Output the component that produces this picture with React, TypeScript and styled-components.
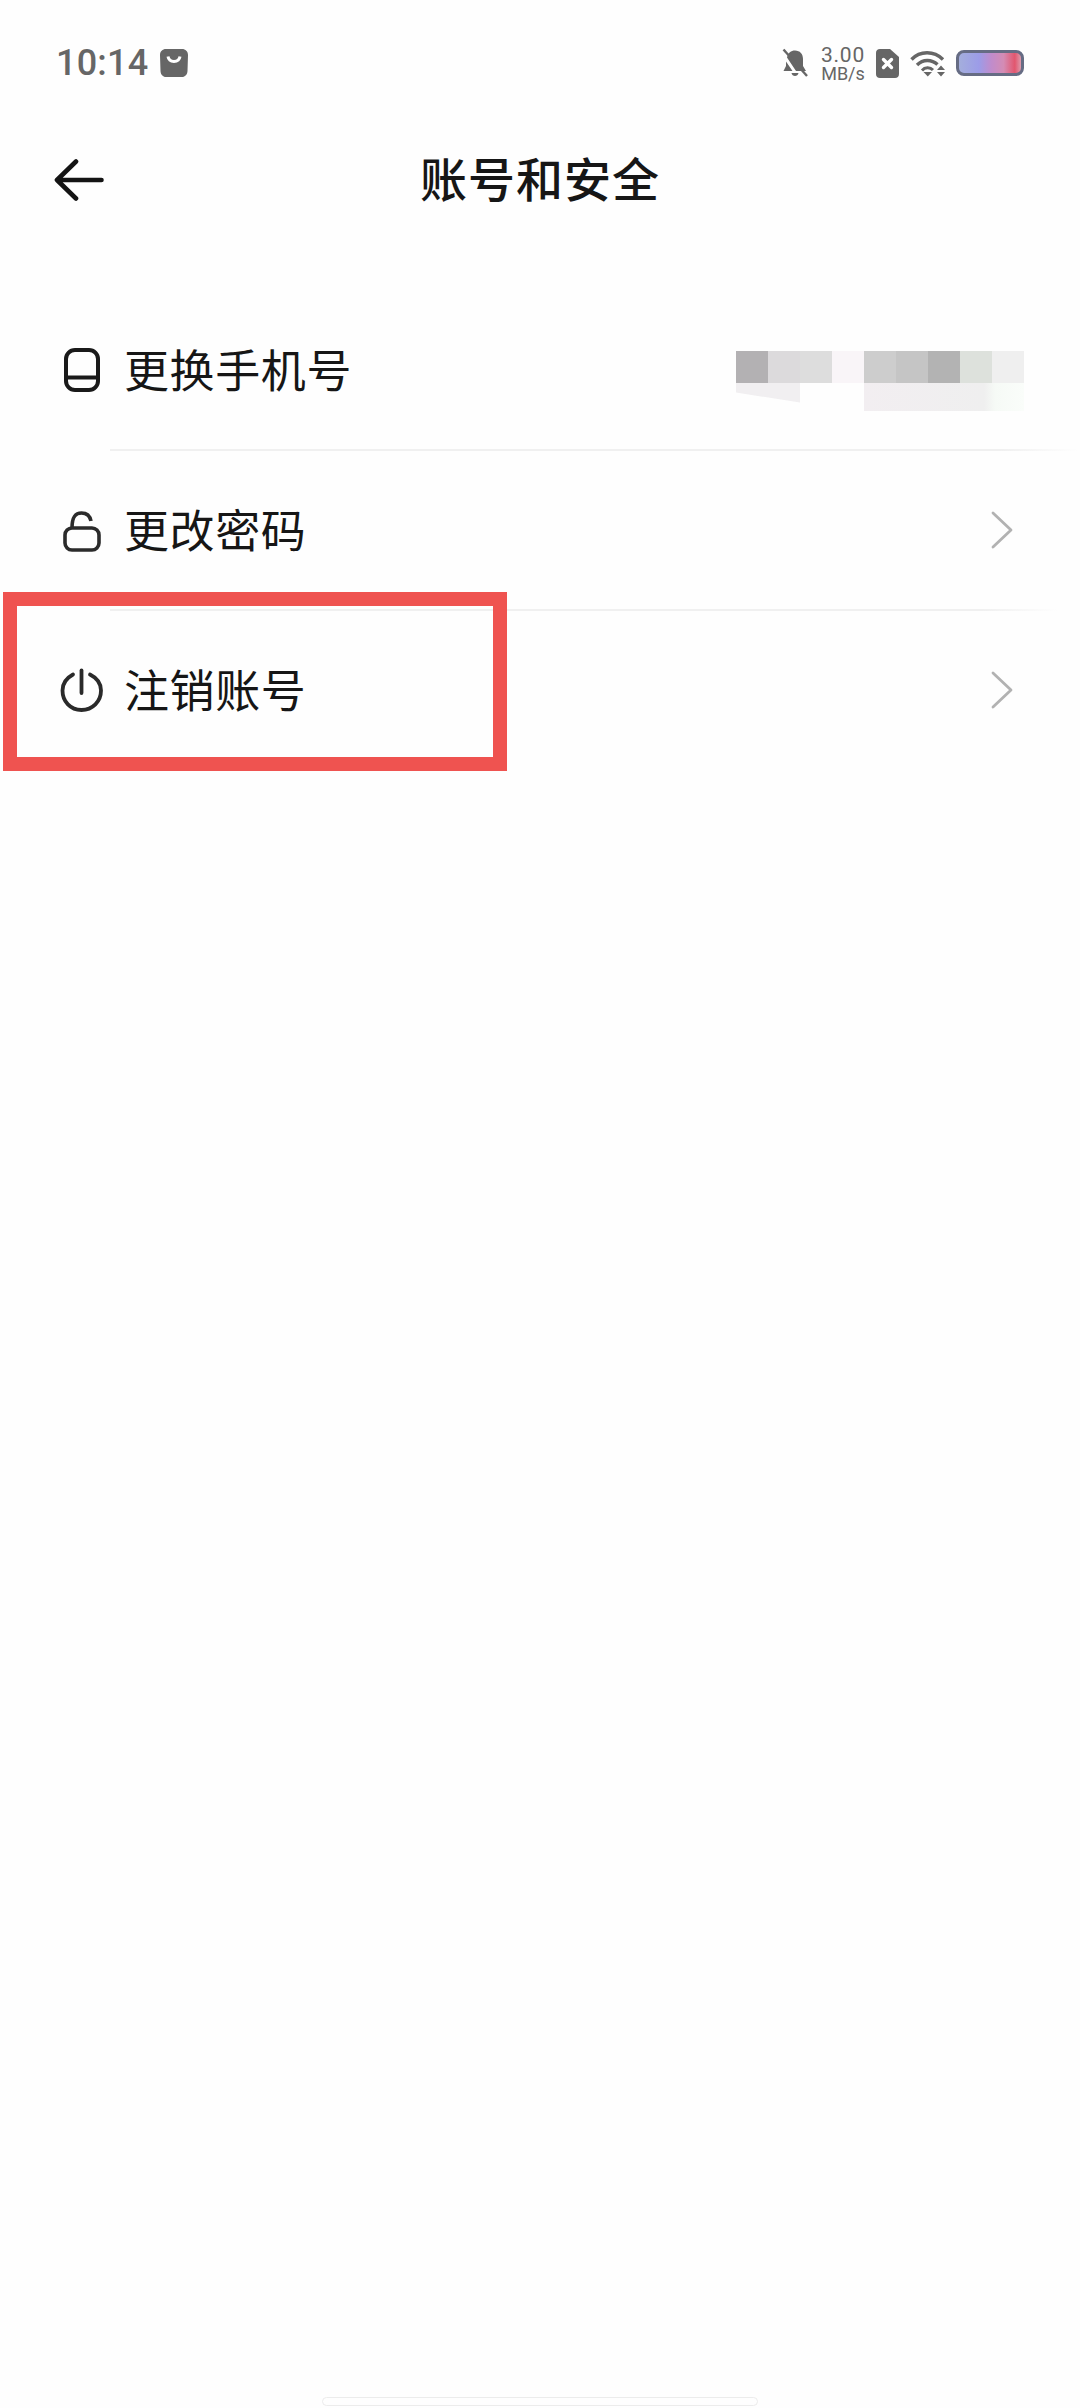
import styled, { createGlobalStyle } from 'styled-components';

const blurColors = ['#b3b1b3', '#dcdadc', '#dddddd', '#f9f5f8', '#cdcdcd', '#c5c5c5', '#b3b3b3', '#dde1dc', '#efefef'];

const GlobalStyle = createGlobalStyle`
  html, body {
    margin: 0;
    padding: 0;
    background: #fefefe;
  }
`;

const Page = styled.div`
  position: relative;
  width: 1080px;
  height: 2408px;
  display: flex;
  flex-direction: column;
  overflow: hidden;
  background: #fefefe;
  font-family: 'Noto Sans CJK SC', 'Noto Sans', sans-serif;
  color: #161616;
`;

const StatusBar = styled.div`
  height: 100px;
  padding: 26px 56px 0 56px;
  box-sizing: border-box;
  display: flex;
  align-items: center;
  justify-content: space-between;
  color: #666;
`;

const StatusLeft = styled.div`
  display: flex;
  align-items: center;
  gap: 12px;
`;

const StatusRight = styled.div`
  display: flex;
  align-items: center;
`;

const Time = styled.span`
  font-family: Roboto, sans-serif;
  font-size: 36px;
  font-weight: 500;
  line-height: 36px;
  letter-spacing: 0.2px;
`;

const Speed = styled.div`
  width: 46px;
  margin: 0 10px 0 12px;
  font-family: Roboto, sans-serif;
  display: flex;
  flex-direction: column;
  align-items: center;
  color: #666;
`;

const SpeedValue = styled.span`
  font-size: 21px;
  line-height: 20px;
  letter-spacing: 0.8px;
`;

const SpeedUnit = styled.span`
  font-size: 18px;
  line-height: 17px;
`;

const WifiSlot = styled.div`
  margin-left: 10px;
  display: flex;
`;

const Battery = styled.div`
  width: 68px;
  height: 26px;
  margin-left: 10px;
  box-sizing: border-box;
  border: 3px solid #666c84;
  border-radius: 8px;
  background: linear-gradient(90deg, #a4aedc 0%, #9c9ce8 32%, #c08ccc 52%, #d48cb4 72%, #e2566e 90%, #dc9aac 100%);
`;

const NavBar = styled.div`
  position: relative;
  height: 160px;
  padding-left: 54px;
  display: flex;
  align-items: center;
`;

const Title = styled.h1`
  position: absolute;
  left: 0;
  right: 0;
  top: 47px;
  margin: 0;
  text-align: center;
  font-size: 47px;
  font-weight: 500;
  letter-spacing: 1px;
  line-height: 60px;
`;

const List = styled.div`
  margin-top: 31px;
  display: flex;
  flex-direction: column;
`;

const Row = styled.div`
  height: 158px;
  padding: 0 67px 0 60px;
  display: flex;
  align-items: center;
`;

const RowIcon = styled.div`
  width: 44px;
  height: 44px;
  margin-right: 23px;
  flex-shrink: 0;
  display: flex;
`;

const RowLabel = styled.span`
  flex: 1;
  font-size: 45px;
  line-height: 60px;
  margin: -2px 0 0 -3px;
  letter-spacing: 0.6px;
`;

const Divider = styled.div<{ $width: number }>`
  width: ${(p) => p.$width}px;
  height: 2px;
  margin-left: 110px;
  background: linear-gradient(90deg, #f0f0f0 0%, #f0f0f0 92%, #fefefe 100%);
`;

const Blurred = styled.div`
  width: 288px;
  height: 60px;
  margin: 21px -11px 0 0;
`;

const BlurredTop = styled.div`
  display: flex;
  height: 32px;
`;

const BlurCell = styled.div<{ $color: string }>`
  width: 32px;
  background: ${(p) => p.$color};
`;

const BlurredBottom = styled.div`
  display: flex;
  height: 28px;
`;

const SmearLeft = styled.div`
  width: 64px;
  height: 20px;
  background: #f1eff1;
  clip-path: polygon(0 0, 100% 0, 100% 100%, 0 50%);
`;

const SmearRight = styled.div`
  width: 160px;
  height: 28px;
  margin-left: 64px;
  background: linear-gradient(90deg, #f2eef1 0%, #efefef 75%, #f6faf6 82%, #fafdfa 100%);
`;

const Highlight = styled.div`
  position: absolute;
  left: 3px;
  top: 592px;
  width: 504px;
  height: 179px;
  box-sizing: border-box;
  border: 14px solid #ef5350;
`;

const HomeBar = styled.div`
  width: 436px;
  height: 9px;
  margin: auto auto 2px;
  box-sizing: border-box;
  border: 1px solid #ececec;
  border-radius: 5px;
`;

const BagIcon = () => (
  <svg width="28" height="28" viewBox="0 0 28 28">
    <path d="M6 0H22C25.5 0 28 2.5 28 6L27.5 22C27.4 25.5 25 28 22 28H6C3 28 .6 25.5 .5 22L0 6C0 2.5 2.5 0 6 0Z" fill="#666" />
    <path d="M8 7.5C9 14 19 14 20 7.5" fill="none" stroke="#fff" strokeWidth="3" />
  </svg>
);

const BellOffIcon = () => (
  <svg width="26" height="30" viewBox="0 0 26 30">
    <path d="M5 9.5C6 5 9 2.5 13 2.5C18 2.5 21 6 21 11V18L24 23H14Z" fill="#666" />
    <path d="M4 13.5V18L1.5 23H10.5ZM9.5 25H16.5C16 29 10 29 9.5 25Z" fill="#666" />
    <path d="M1.5 1.5L25 28" stroke="#666" strokeWidth="2.4" />
  </svg>
);

const SimIcon = () => (
  <svg width="24" height="29" viewBox="0 0 24 29">
    <path d="M4 0H14L23 8V25C23 27.5 21.5 29 19 29H4C1.5 29 0 27.5 0 25V4C0 1.5 1.5 0 4 0Z" fill="#666" />
    <path d="M7.5 10.5L15.5 18.5M15.5 10.5L7.5 18.5" stroke="#fff" strokeWidth="3.4" strokeLinecap="round" />
  </svg>
);

const WifiIcon = () => (
  <svg width="36" height="27" viewBox="0 0 36 27" fill="none" stroke="#666">
    <path d="M1.5 9.5C10 .5 24 .5 33 9.5" strokeWidth="3.4" />
    <path d="M7 15C13 9 21.5 9 27.5 14.5" strokeWidth="3.4" />
    <path d="M12 20.5C15 17 20 17 23 20" strokeWidth="3" />
    <path d="M13.5 22H22L17.8 26.5Z" fill="#666" stroke="none" />
    <path d="M27 20H35L31 15.5ZM27 22H35L31 26.5Z" fill="#666" stroke="none" />
  </svg>
);

const BackIcon = () => (
  <svg width="50" height="42" viewBox="0 0 50 42" fill="none" stroke="#141414" strokeWidth="4.6" strokeLinecap="round" strokeLinejoin="round">
    <path d="M47.5 21H3M22 2.5L3 21L22 39.5" />
  </svg>
);

const PhoneIcon = () => (
  <svg width="44" height="44" viewBox="0 0 44 44" fill="none" stroke="#1a1a1a" strokeWidth="4">
    <rect x="6" y="2" width="32" height="40" rx="9" />
    <path d="M6 29.5H38" />
  </svg>
);

const LockIcon = () => (
  <svg width="44" height="44" viewBox="0 0 44 44" fill="none" stroke="#2b2b2b" strokeWidth="3.6">
    <rect x="5" y="20" width="34" height="22" rx="7" />
    <path d="M12 20C12 8 16 5 21.5 5C27 5 30 8 31 13" />
  </svg>
);

const PowerIcon = () => (
  <svg width="44" height="44" viewBox="0 0 44 44" fill="none" stroke="#2a2a2a" strokeWidth="3.8" strokeLinecap="round">
    <path d="M13 6.5C6.5 10 2.5 15 2.5 22.5C2.5 33.5 10.5 42 21.5 42C32.5 42 41 33.5 41 22.5C41 15 37 10 30 6.5" />
    <path d="M21.5 2.5V25" />
  </svg>
);

const ChevronIcon = () => (
  <svg width="22" height="38" viewBox="0 0 22 38" fill="none" stroke="#b2b2b2" strokeWidth="2.8" strokeLinecap="round" strokeLinejoin="round">
    <path d="M2 2L20 19L2 36" />
  </svg>
);

const App = () => {
  return (
    <Page>
      <GlobalStyle />
      <StatusBar>
        <StatusLeft>
          <Time>10:14</Time>
          <BagIcon />
        </StatusLeft>
        <StatusRight>
          <BellOffIcon />
          <Speed>
            <SpeedValue>3.00</SpeedValue>
            <SpeedUnit>MB/s</SpeedUnit>
          </Speed>
          <SimIcon />
          <WifiSlot>
            <WifiIcon />
          </WifiSlot>
          <Battery />
        </StatusRight>
      </StatusBar>
      <NavBar>
        <BackIcon />
        <Title>账号和安全</Title>
      </NavBar>
      <List>
        <Row>
          <RowIcon>
            <PhoneIcon />
          </RowIcon>
          <RowLabel>更换手机号</RowLabel>
          <Blurred>
            <BlurredTop>
              {blurColors.map((color, i) => (
                <BlurCell key={i} $color={color} />
              ))}
            </BlurredTop>
            <BlurredBottom>
              <SmearLeft />
              <SmearRight />
            </BlurredBottom>
          </Blurred>
        </Row>
        <Divider $width={968} />
        <Row>
          <RowIcon>
            <LockIcon />
          </RowIcon>
          <RowLabel>更改密码</RowLabel>
          <ChevronIcon />
        </Row>
        <Divider $width={948} />
        <Row>
          <RowIcon>
            <PowerIcon />
          </RowIcon>
          <RowLabel>注销账号</RowLabel>
          <ChevronIcon />
        </Row>
      </List>
      <Highlight />
      <HomeBar />
    </Page>
  );
};

export default App;
